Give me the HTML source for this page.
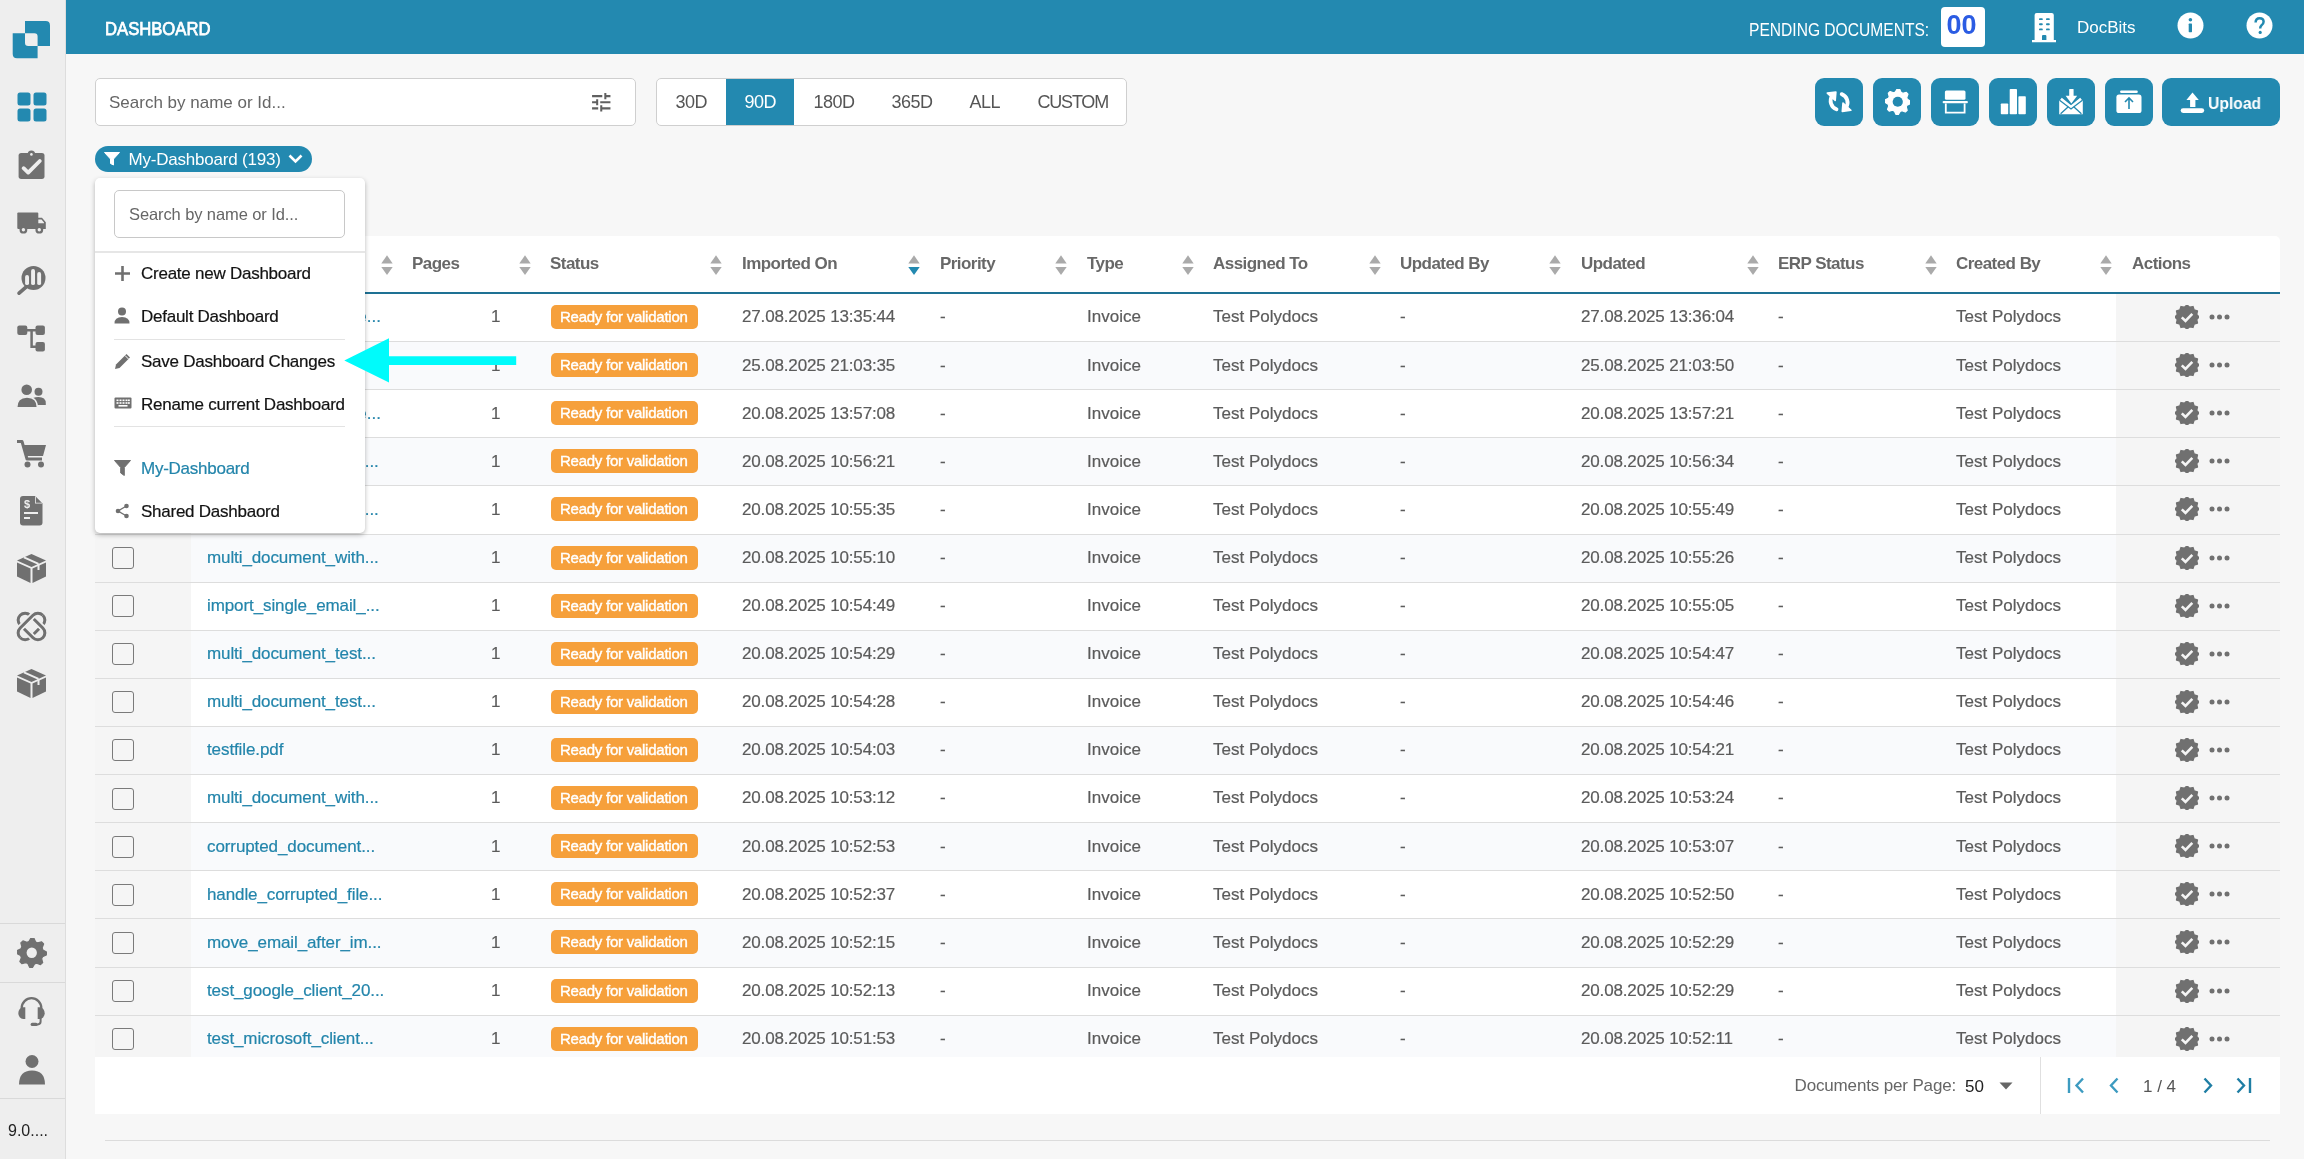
<!DOCTYPE html><html><head><meta charset="utf-8"><style>
*{box-sizing:border-box;margin:0;padding:0}
html,body{width:2304px;height:1159px;overflow:hidden;background:#f7f7f7;font-family:"Liberation Sans",sans-serif;color:#5b5b5b}
.abs{position:absolute}
#side{position:absolute;left:0;top:0;width:66px;height:1159px;background:#eeeeee;border-right:1px solid #dddddd}
#side svg{position:absolute}
.sep{position:absolute;left:0;width:65px;height:1px;background:#d9d9d9}
#hdr{position:absolute;left:66px;top:0;width:2238px;height:54px;background:#2389b0;color:#fff}
.t{position:absolute;white-space:nowrap;line-height:1}
.box{position:absolute;background:#fff;border:1px solid #cfcfcf;border-radius:5px}
.tb{position:absolute;top:78px;width:48px;height:48px;background:#2389b0;border-radius:9px}
.tb svg{position:absolute;left:0;top:0}
#table{position:absolute;left:95px;top:236px;width:2185px;height:821px;background:#fff;border-radius:5px 5px 0 0;overflow:hidden}
.hcell{position:absolute;top:19px;font-weight:bold;font-size:17px;color:#686868;letter-spacing:-0.55px;white-space:nowrap;line-height:1}
.sort{position:absolute;top:19.2px}
.row{position:absolute;left:0;width:2185px;height:48.11px;border-bottom:1px solid #dddddd}
.row.even{background:#f9fafc}
.c{position:absolute;top:14.4px;font-size:17px;line-height:1;white-space:nowrap;color:#5b5b5b;-webkit-text-stroke:0.2px currentColor}
.chkcol{position:absolute;left:0;top:0;width:96px;height:100%;background:#f5f5f5}
.actcol{position:absolute;left:2021px;top:0;width:164px;height:100%;background:#f5f5f5}
.chk{position:absolute;left:17px;top:12.5px;width:22px;height:22px;border:1.7px solid #7a7a7a;border-radius:3px;background:transparent}
.name{color:#2385ab}
.badge{position:absolute;left:456px;top:11px;width:147px;height:24px;background:#f6a03b;border-radius:5px;color:#fff;font-size:15px;-webkit-text-stroke:0.4px #fff;letter-spacing:-0.25px;line-height:24px;padding-left:9px;white-space:nowrap}
#dd{position:absolute;left:95px;top:178px;width:270px;height:355px;background:#fff;border-radius:5px;box-shadow:0 2px 5px rgba(0,0,0,0.28)}
.ddi{position:absolute;left:46px;font-size:17px;color:#131313;white-space:nowrap;line-height:1;letter-spacing:-0.25px;-webkit-text-stroke:0.2px currentColor}
.ddsep{position:absolute;left:19px;width:231px;height:1px;background:#e3e3e3}
</style></head><body><div id="root" style="will-change:transform;position:absolute;left:0;top:0;width:2304px;height:1159px;overflow:hidden">
<div id="side">
<svg style="left:0px;top:0px" width="60" height="60" viewBox="0 0 60 60"><path d="M25 21 H45.6 Q50 21 50 25.4 V46 H37.6 V36.4 Q37.6 33.2 34.4 33.2 H25 Z" fill="#2389b0"/><path d="M12.7 33.2 H25 V42.8 Q25 46 28.2 46 H37.6 V58.2 H17 Q12.7 58.2 12.7 54 Z" fill="#2389b0"/></svg>
<svg style="left:17px;top:92px" width="30" height="30" viewBox="0 0 30 30"><rect x="0.5" y="0.5" width="13" height="13" rx="2.5" fill="#2389b0"/><rect x="16.5" y="0.5" width="13" height="13" rx="2.5" fill="#2389b0"/><rect x="0.5" y="16.5" width="13" height="13" rx="2.5" fill="#2389b0"/><rect x="16.5" y="16.5" width="13" height="13" rx="2.5" fill="#2389b0"/></svg>
<svg style="left:18px;top:150px" width="28" height="30" viewBox="0 0 28 30"><rect x="0.6" y="2.9" width="25.9" height="26" rx="2.6" fill="#707070"/><circle cx="13.4" cy="4.2" r="3.7" fill="#707070"/><circle cx="13.4" cy="4.4" r="1.3" fill="#eee"/><path d="M5.6 18.2 L10.2 22.6 L21.8 11" stroke="#eee" stroke-width="3.8" stroke-linecap="round" stroke-linejoin="round" fill="none"/></svg>
<svg style="left:17px;top:211px" width="30" height="24" viewBox="0 0 30 24"><rect x="0.3" y="1.5" width="21" height="16.4" rx="1" fill="#707070"/><path d="M20.6 6.7 H25 L28.8 11.3 V17.9 H20.6 Z" fill="#707070"/><path d="M21.3 8.4 H24.5 L27 11.5 V12.3 H21.3 Z" fill="#eee"/><circle cx="6.4" cy="18.7" r="3.9" fill="#707070"/><circle cx="6.4" cy="18.7" r="1.7" fill="#eee"/><circle cx="22.3" cy="18.7" r="3.9" fill="#707070"/><circle cx="22.3" cy="18.7" r="1.7" fill="#eee"/></svg>
<svg style="left:17px;top:266px" width="30" height="30" viewBox="0 0 30 30"><circle cx="16.5" cy="12.1" r="12" fill="#707070"/><rect x="8.1" y="9.1" width="3.9" height="10" rx="1.9" fill="#eee"/><rect x="14.1" y="3.1" width="3.9" height="16" rx="1.9" fill="#eee"/><rect x="20.2" y="6.1" width="3.9" height="13" rx="1.9" fill="#eee"/><path d="M9 21.2 L2.1 27.2" stroke="#707070" stroke-width="3.6" stroke-linecap="round"/></svg>
<svg style="left:17px;top:324px" width="30" height="30" viewBox="0 0 30 30"><rect x="0.3" y="1.6" width="10" height="9.5" rx="2" fill="#707070"/><rect x="18.5" y="1.6" width="9.4" height="9.5" rx="2" fill="#707070"/><rect x="18.5" y="18" width="9.4" height="9.5" rx="2" fill="#707070"/><path d="M9 6.3 H19 M14.6 6.3 V22.7 H19" stroke="#707070" stroke-width="2.5" fill="none"/></svg>
<svg style="left:16px;top:383px" width="31" height="27" viewBox="0 0 31 27"><circle cx="22.5" cy="8.7" r="4" fill="#707070"/><path d="M17 22.1 V14.9 Q19.5 14.1 22.5 14.1 Q29.8 14.1 29.8 20.5 V22.1 Z" fill="#707070"/><path d="M0.7 24.8 Q0.7 14.1 11 14.1 Q21.4 14.1 21.4 24.8 Z" fill="#707070" stroke="#eeeeee" stroke-width="1.4"/><circle cx="10.7" cy="6.7" r="5.3" fill="#707070"/></svg>
<svg style="left:16px;top:439px" width="31" height="30" viewBox="0 0 31 30"><path d="M1 2.5 H6 L11 20 H26" stroke="#707070" stroke-width="3" fill="none" stroke-linejoin="round"/><path d="M7 6 H30 L27 17 H10 Z" fill="#707070"/><circle cx="11.5" cy="25.5" r="3" fill="#707070"/><circle cx="25" cy="25.5" r="3" fill="#707070"/></svg>
<svg style="left:20px;top:496px" width="23" height="30" viewBox="0 0 23 30"><path d="M3 0 H15 L22.5 7.5 V26.5 Q22.5 29.5 19.5 29.5 H3 Q0 29.5 0 26.5 V3 Q0 0 3 0 Z" fill="#707070"/><path d="M15 0 V7.5 H22.5" fill="#eee"/><path d="M15.8 0.8 L15.8 6.7 L21.7 6.7 Z" fill="#707070"/><text x="4" y="12" font-size="11" font-family="Liberation Sans" fill="#eee" font-weight="bold">$</text><rect x="4" y="16" width="14" height="2" fill="#eee"/><rect x="4" y="21" width="6" height="2" fill="#eee"/></svg>
<svg style="left:16px;top:553px" width="31" height="31" viewBox="0 0 31 31"><path d="M15.5 1 L30 7.5 L15.5 14 L1 7.5 Z" fill="#707070"/><path d="M1 9.5 L14.5 15.5 V30 L1 23.5 Z" fill="#707070"/><path d="M30 9.5 L16.5 15.5 V30 L30 23.5 Z" fill="#707070"/><path d="M8 4.3 L22.5 10.8" stroke="#eee" stroke-width="2"/><path d="M22.5 11 V17" stroke="#eee" stroke-width="2"/></svg>
<svg style="left:16px;top:611px" width="31" height="31" viewBox="0 0 31 31"><defs><clipPath id="cBR"><path d="M31 0 L31 31 L0 31 Z"/></clipPath><clipPath id="cTL"><path d="M0 0 L31 0 L0 31 Z"/></clipPath></defs><g fill="none" stroke-width="3"><rect x="-16" y="-6.95" width="32" height="13.9" rx="6.95" transform="translate(15.5 15.5) rotate(-45)" stroke="#707070"/><g clip-path="url(#cBR)"><rect x="-16" y="-6.95" width="32" height="13.9" rx="6.95" transform="translate(15.5 15.5) rotate(45)" stroke="#eeeeee" stroke-width="6.5"/></g><rect x="-16" y="-6.95" width="32" height="13.9" rx="6.95" transform="translate(15.5 15.5) rotate(45)" stroke="#707070"/><g clip-path="url(#cTL)"><rect x="-16" y="-6.95" width="32" height="13.9" rx="6.95" transform="translate(15.5 15.5) rotate(-45)" stroke="#eeeeee" stroke-width="6.5"/><rect x="-16" y="-6.95" width="32" height="13.9" rx="6.95" transform="translate(15.5 15.5) rotate(-45)" stroke="#707070"/></g></g></svg>
<svg style="left:16px;top:668px" width="31" height="31" viewBox="0 0 31 31"><path d="M15.5 1 L30 7.5 L15.5 14 L1 7.5 Z" fill="#707070"/><path d="M1 9.5 L14.5 15.5 V30 L1 23.5 Z" fill="#707070"/><path d="M30 9.5 L16.5 15.5 V30 L30 23.5 Z" fill="#707070"/><path d="M8 4.3 L22.5 10.8" stroke="#eee" stroke-width="2"/><path d="M22.5 11 V17" stroke="#eee" stroke-width="2"/></svg>
<div class="sep" style="top:923px"></div><div class="sep" style="top:982px"></div><div class="sep" style="top:1098px"></div>
<svg style="left:17px;top:938px" width="29.5" height="29.5" viewBox="0 0 29.5 29.5"><path d="M14.03 0.02 L16.91 0.16 L18.63 3.92 L20.66 4.88 L24.66 3.82 L26.60 5.96 L25.15 9.83 L25.91 11.95 L29.48 14.03 L29.34 16.91 L25.58 18.63 L24.62 20.66 L25.68 24.66 L23.54 26.60 L19.67 25.15 L17.55 25.91 L15.47 29.48 L12.59 29.34 L10.87 25.58 L8.84 24.62 L4.84 25.68 L2.90 23.54 L4.35 19.67 L3.59 17.55 L0.02 15.47 L0.16 12.59 L3.92 10.87 L4.88 8.84 L3.82 4.84 L5.96 2.90 L9.83 4.35 L11.95 3.59 Z" fill="#707070" stroke="#707070" stroke-width="1.2" stroke-linejoin="round"/><circle cx="14.75" cy="14.75" r="5.16" fill="#eee"/></svg>
<svg style="left:17px;top:997px" width="30" height="31" viewBox="0 0 30 31"><path d="M4.7 14.5 V11 A9.8 9.8 0 0 1 24.3 11 V14.5" stroke="#707070" stroke-width="2.3" fill="none"/><path d="M8.3 10.3 H6.2 A4.9 5.85 0 0 0 6.2 22 H8.3 Z" fill="#707070"/><path d="M20.7 10.3 H22.8 A4.9 5.85 0 0 1 22.8 22 H20.7 Z" fill="#707070"/><path d="M23.6 21 V24.6 Q23.6 27.4 20.8 27.4 H16" stroke="#707070" stroke-width="2" fill="none"/><rect x="13.6" y="25.8" width="7" height="3.2" rx="1.6" fill="#707070"/></svg>
<svg style="left:19px;top:1055px" width="26" height="30" viewBox="0 0 26 30"><circle cx="13" cy="6.5" r="6.5" fill="#707070"/><path d="M0 29.5 Q0 15.5 13 15.5 Q26 15.5 26 29.5 Z" fill="#707070"/></svg>
<div class="t" style="left:8px;top:1123px;font-size:16px;color:#222">9.0....</div>
</div>
<div id="hdr">
<div class="t" style="left:39px;top:20px;font-size:18.5px;-webkit-text-stroke:0.75px #fff;transform:scaleX(0.9);transform-origin:0 0">DASHBOARD</div>
<div class="t" style="left:1683px;top:20.5px;font-size:18px;transform:scaleX(0.866);transform-origin:0 0">PENDING DOCUMENTS:</div>
<div class="abs" style="left:1875px;top:7px;width:44px;height:40px;background:#fff;border-radius:4px"></div>
<div class="t" style="left:1880.5px;top:12px;font-size:27px;font-weight:bold;color:#2b5ce3">00</div>
<svg class="abs" style="left:1966px;top:12px" width="24" height="31" viewBox="0 0 24 31"><path d="M2.6 3 Q2.6 0.9 4.7 0.9 H19.7 Q21.8 0.9 21.8 3 V28 H24 V30.3 H0 V28 H2.6 Z" fill="#fff"/><g fill="#2389b0"><rect x="7" y="6.2" width="3.8" height="1.9" rx="0.9"/><rect x="14" y="6.2" width="3.8" height="1.9" rx="0.9"/><rect x="7" y="11.3" width="3.8" height="1.9" rx="0.9"/><rect x="14" y="11.3" width="3.8" height="1.9" rx="0.9"/><rect x="7" y="16.4" width="3.8" height="1.9" rx="0.9"/><rect x="14" y="16.4" width="3.8" height="1.9" rx="0.9"/><path d="M10 28 V24 Q10 22.9 11.1 22.9 H13.3 Q14.4 22.9 14.4 24 V28 Z"/></g></svg>
<div class="t" style="left:2011px;top:19px;font-size:17px">DocBits</div>
<svg class="abs" style="left:2111px;top:12px" width="27" height="27" viewBox="0 0 27 27"><circle cx="13.5" cy="13.5" r="13" fill="#fff"/><circle cx="13.4" cy="7.8" r="1.8" fill="#2389b0"/><rect x="11.7" y="11.6" width="3.3" height="8.6" rx="0.6" fill="#2389b0"/></svg>
<svg class="abs" style="left:2180px;top:12px" width="27" height="27" viewBox="0 0 27 27"><circle cx="13.5" cy="13.5" r="13" fill="#fff"/><path d="M9.6 10.4 Q9.6 6.2 13.6 6.2 Q17.6 6.2 17.6 9.8 Q17.6 12 15.4 13.4 Q14.2 14.3 14.2 16.6" stroke="#2389b0" stroke-width="2.5" fill="none"/><circle cx="14.2" cy="20.4" r="1.6" fill="#2389b0"/></svg>
</div>
<div class="box" style="left:95px;top:78px;width:541px;height:48px"></div>
<div class="t" style="left:109px;top:93.5px;font-size:17px;color:#666;letter-spacing:0px">Search by name or Id...</div>
<svg class="abs" style="left:588.7px;top:89.6px" width="24.5" height="24.5" viewBox="0 0 24 24" fill="#606060"><path d="M3 17v2h6v-2H3zM3 5v2h10V5H3zm10 16v-2h8v-2h-8v-2h-2v6h2zM7 9v2H3v2h4v2h2V9H7zm14 4v-2H11v2h10zm-6-4h2V7h4V5h-4V3h-2v6z"/></svg>
<div class="box" style="left:656px;top:78px;width:471px;height:48px;overflow:hidden"><div class="abs" style="left:69px;top:0;width:68px;height:46px;background:#2389b0"></div></div>
<div class="t" style="left:675.5px;top:93px;font-size:18px;color:#555;letter-spacing:-0.5px">30D</div>
<div class="t" style="left:744.5px;top:93px;font-size:18px;color:#fff;letter-spacing:-0.5px">90D</div>
<div class="t" style="left:813.5px;top:93px;font-size:18px;color:#555;letter-spacing:-0.5px">180D</div>
<div class="t" style="left:891.5px;top:93px;font-size:18px;color:#555;letter-spacing:-0.5px">365D</div>
<div class="t" style="left:969.5px;top:93px;font-size:18px;color:#555;letter-spacing:-0.5px">ALL</div>
<div class="t" style="left:1037.5px;top:93px;font-size:18px;color:#555;letter-spacing:-1.2px">CUSTOM</div>
<div class="tb" style="left:1815.3px"><svg width="48" height="48" viewBox="0 0 48 48"><g id="syncL"><path d="M21.5 31.3 A9 9 0 0 1 17.2 17.8" stroke="#fff" stroke-width="3.8" fill="none" stroke-linecap="round"/><path d="M12.3 15.1 L20.9 14 L20.2 22.4 Z" fill="#fff" stroke="#fff" stroke-width="1.6" stroke-linejoin="round"/></g><use href="#syncL" transform="rotate(180 24.1 23.7)"/></svg></div>
<div class="tb" style="left:1873.3px"><svg style="left:11.4px;top:11px;position:absolute" width="25.5" height="25.5" viewBox="0 0 25.5 25.5"><path d="M12.12 0.02 L14.62 0.14 L16.10 3.39 L17.86 4.22 L21.31 3.30 L22.99 5.15 L21.74 8.50 L22.40 10.33 L25.48 12.12 L25.36 14.62 L22.11 16.10 L21.28 17.86 L22.20 21.31 L20.35 22.99 L17.00 21.74 L15.17 22.40 L13.38 25.48 L10.88 25.36 L9.40 22.11 L7.64 21.28 L4.19 22.20 L2.51 20.35 L3.76 17.00 L3.10 15.17 L0.02 13.38 L0.14 10.88 L3.39 9.40 L4.22 7.64 L3.30 4.19 L5.15 2.51 L8.50 3.76 L10.33 3.10 Z" fill="#fff" stroke="#fff" stroke-width="1.2" stroke-linejoin="round"/><circle cx="12.75" cy="12.75" r="5.10" fill="#2389b0"/></svg></div>
<div class="tb" style="left:1931.3px"><svg width="48" height="48" viewBox="0 0 48 48"><rect x="13.9" y="12.5" width="20.6" height="9.3" rx="1.5" fill="#fff"/><rect x="11.7" y="23" width="25.1" height="2.2" rx="0.8" fill="#fff"/><path d="M14.8 25.5 V34.6 H33.6 V25.5" stroke="#fff" stroke-width="1.8" fill="none"/></svg></div>
<div class="tb" style="left:1988.7px"><svg width="48" height="48" viewBox="0 0 48 48"><rect x="11.8" y="25.5" width="7.4" height="10.7" rx="0.8" fill="#fff"/><rect x="20.7" y="11" width="7.3" height="25.2" rx="0.8" fill="#fff"/><rect x="29.4" y="18.2" width="7.4" height="18" rx="0.8" fill="#fff"/></svg></div>
<div class="tb" style="left:2046.6px"><svg width="48" height="48" viewBox="0 0 48 48"><path d="M12.2 23 L14.8 19.8 L24 27.2 L33.2 19.8 L35.8 23 V36.2 H12.2 Z" fill="#fff"/><path d="M12.6 22.2 L24 31 L35.4 22.2" stroke="#2389b0" stroke-width="1.3" fill="none"/><path d="M13.6 35.8 L21.3 28.8 M34.4 35.8 L26.7 28.8" stroke="#2389b0" stroke-width="1.3" fill="none"/><rect x="22.2" y="11" width="4.4" height="8" rx="0.6" fill="#fff"/><path d="M18.6 17.8 H30.2 L24.4 25.4 Z" fill="#fff"/></svg></div>
<div class="tb" style="left:2104.5px"><svg width="48" height="48" viewBox="0 0 48 48"><rect x="15.1" y="12.5" width="17.7" height="2.4" rx="1.2" fill="#fff"/><rect x="11.4" y="16.6" width="25.1" height="18.4" rx="2.6" fill="#fff"/><path d="M24 31 V20.2 M20 24 L24 20 L28 24" stroke="#2389b0" stroke-width="1.6" fill="none"/></svg></div>
<div class="tb" style="left:2162px;width:118px"><svg width="48" height="48" viewBox="0 0 48 48" style="left:0px"><path d="M30.5 14.4 L36.8 22 H33.4 V29 H28.1 V22 H24.4 Z" fill="#fff"/><rect x="18.7" y="30.2" width="23.5" height="4.7" rx="2.35" fill="#fff"/></svg><div class="t" style="left:46px;top:17px;font-size:16.5px;font-weight:bold;color:#fff;transform:scaleX(0.95);transform-origin:0 0">Upload</div></div>
<div class="abs" style="left:95px;top:146px;width:217px;height:26px;background:#2389b0;border-radius:13px"></div>
<svg class="abs" style="left:104px;top:152px" width="16" height="14" viewBox="0 0 16 14"><path d="M0.5 0.5 H15.5 L9.5 7 V13 L6.5 11.5 V7 Z" fill="#fff" stroke="#fff" stroke-linejoin="round"/></svg>
<div class="t" style="left:128.5px;top:150.5px;font-size:17px;color:#fff;letter-spacing:-0.2px">My-Dashboard (193)</div>
<svg class="abs" style="left:288px;top:154px" width="15" height="10" viewBox="0 0 15 10"><path d="M1.5 1.5 L7.5 7.5 L13.5 1.5" stroke="#fff" stroke-width="2.6" fill="none"/></svg>
<div id="table">
<div class="hcell" style="left:112px">Name</div>
<div class="hcell" style="left:317px">Pages</div>
<div class="hcell" style="left:455px">Status</div>
<div class="hcell" style="left:647px">Imported On</div>
<div class="hcell" style="left:845px">Priority</div>
<div class="hcell" style="left:992px">Type</div>
<div class="hcell" style="left:1118px">Assigned To</div>
<div class="hcell" style="left:1305px">Updated By</div>
<div class="hcell" style="left:1486px">Updated</div>
<div class="hcell" style="left:1683px">ERP Status</div>
<div class="hcell" style="left:1861px">Created By</div>
<div class="hcell" style="left:2037px">Actions</div>
<svg class="sort" style="left:285.5px" width="12" height="21" viewBox="0 0 12 21"><path d="M6 0.2 L11.7 8.6 L0.3 8.6 Z" fill="#aaaaaa"/><path d="M6 20 L11.7 12 L0.3 12 Z" fill="#aaaaaa"/></svg>
<svg class="sort" style="left:424.0px" width="12" height="21" viewBox="0 0 12 21"><path d="M6 0.2 L11.7 8.6 L0.3 8.6 Z" fill="#aaaaaa"/><path d="M6 20 L11.7 12 L0.3 12 Z" fill="#aaaaaa"/></svg>
<svg class="sort" style="left:615.0px" width="12" height="21" viewBox="0 0 12 21"><path d="M6 0.2 L11.7 8.6 L0.3 8.6 Z" fill="#aaaaaa"/><path d="M6 20 L11.7 12 L0.3 12 Z" fill="#aaaaaa"/></svg>
<svg class="sort" style="left:813.0px" width="12" height="21" viewBox="0 0 12 21"><path d="M6 0.2 L11.7 8.6 L0.3 8.6 Z" fill="#aaaaaa"/><path d="M6 20 L11.7 12 L0.3 12 Z" fill="#2389b0"/></svg>
<svg class="sort" style="left:959.5px" width="12" height="21" viewBox="0 0 12 21"><path d="M6 0.2 L11.7 8.6 L0.3 8.6 Z" fill="#aaaaaa"/><path d="M6 20 L11.7 12 L0.3 12 Z" fill="#aaaaaa"/></svg>
<svg class="sort" style="left:1086.5px" width="12" height="21" viewBox="0 0 12 21"><path d="M6 0.2 L11.7 8.6 L0.3 8.6 Z" fill="#aaaaaa"/><path d="M6 20 L11.7 12 L0.3 12 Z" fill="#aaaaaa"/></svg>
<svg class="sort" style="left:1273.5px" width="12" height="21" viewBox="0 0 12 21"><path d="M6 0.2 L11.7 8.6 L0.3 8.6 Z" fill="#aaaaaa"/><path d="M6 20 L11.7 12 L0.3 12 Z" fill="#aaaaaa"/></svg>
<svg class="sort" style="left:1453.5px" width="12" height="21" viewBox="0 0 12 21"><path d="M6 0.2 L11.7 8.6 L0.3 8.6 Z" fill="#aaaaaa"/><path d="M6 20 L11.7 12 L0.3 12 Z" fill="#aaaaaa"/></svg>
<svg class="sort" style="left:1651.5px" width="12" height="21" viewBox="0 0 12 21"><path d="M6 0.2 L11.7 8.6 L0.3 8.6 Z" fill="#aaaaaa"/><path d="M6 20 L11.7 12 L0.3 12 Z" fill="#aaaaaa"/></svg>
<svg class="sort" style="left:1829.5px" width="12" height="21" viewBox="0 0 12 21"><path d="M6 0.2 L11.7 8.6 L0.3 8.6 Z" fill="#aaaaaa"/><path d="M6 20 L11.7 12 L0.3 12 Z" fill="#aaaaaa"/></svg>
<svg class="sort" style="left:2005.0px" width="12" height="21" viewBox="0 0 12 21"><path d="M6 0.2 L11.7 8.6 L0.3 8.6 Z" fill="#aaaaaa"/><path d="M6 20 L11.7 12 L0.3 12 Z" fill="#aaaaaa"/></svg>
<div class="abs" style="left:0;top:55.5px;width:2185px;height:2px;background:#1e7194;box-shadow:0 0 0.6px #1e7194"></div>
<div class="row" style="top:58.00px"><div class="chkcol"></div><div class="actcol"></div><div class="chk"></div><div class="c name" style="left:112px;letter-spacing:0px">handle_duplicate_file...</div><div class="c" style="left:396px">1</div><div class="badge">Ready for validation</div><div class="c" style="left:647px;letter-spacing:-0.15px">27.08.2025 13:35:44</div><div class="c" style="left:845px">-</div><div class="c" style="left:992px">Invoice</div><div class="c" style="left:1118px">Test Polydocs</div><div class="c" style="left:1305px">-</div><div class="c" style="left:1486px;letter-spacing:-0.15px">27.08.2025 13:36:04</div><div class="c" style="left:1683px">-</div><div class="c" style="left:1861px">Test Polydocs</div><svg class="abs" style="left:2080px;top:11px" width="24" height="24" viewBox="0 0 24 24"><polygon points="12.00,0.00 14.59,2.34 18.00,1.61 19.07,4.93 22.39,6.00 21.66,9.41 24.00,12.00 21.66,14.59 22.39,18.00 19.07,19.07 18.00,22.39 14.59,21.66 12.00,24.00 9.41,21.66 6.00,22.39 4.93,19.07 1.61,18.00 2.34,14.59 0.00,12.00 2.34,9.41 1.61,6.00 4.93,4.93 6.00,1.61 9.41,2.34" fill="#707070" stroke="#707070" stroke-width="1.5" stroke-linejoin="round"/><path d="M6.8 12.3 L10.5 16 L17.3 8.8" stroke="#f5f5f5" stroke-width="2.6" fill="none"/></svg><svg class="abs" style="left:2114px;top:19px" width="22" height="8" viewBox="0 0 22 8"><circle cx="3" cy="4" r="2.5" fill="#707070"/><circle cx="10.5" cy="4" r="2.5" fill="#707070"/><circle cx="18" cy="4" r="2.5" fill="#707070"/></svg></div>
<div class="row even" style="top:106.11px"><div class="chkcol"></div><div class="actcol"></div><div class="chk"></div><div class="c name" style="left:112px;letter-spacing:-0.1px">handle_duplicate_file...</div><div class="c" style="left:396px">1</div><div class="badge">Ready for validation</div><div class="c" style="left:647px;letter-spacing:-0.15px">25.08.2025 21:03:35</div><div class="c" style="left:845px">-</div><div class="c" style="left:992px">Invoice</div><div class="c" style="left:1118px">Test Polydocs</div><div class="c" style="left:1305px">-</div><div class="c" style="left:1486px;letter-spacing:-0.15px">25.08.2025 21:03:50</div><div class="c" style="left:1683px">-</div><div class="c" style="left:1861px">Test Polydocs</div><svg class="abs" style="left:2080px;top:11px" width="24" height="24" viewBox="0 0 24 24"><polygon points="12.00,0.00 14.59,2.34 18.00,1.61 19.07,4.93 22.39,6.00 21.66,9.41 24.00,12.00 21.66,14.59 22.39,18.00 19.07,19.07 18.00,22.39 14.59,21.66 12.00,24.00 9.41,21.66 6.00,22.39 4.93,19.07 1.61,18.00 2.34,14.59 0.00,12.00 2.34,9.41 1.61,6.00 4.93,4.93 6.00,1.61 9.41,2.34" fill="#707070" stroke="#707070" stroke-width="1.5" stroke-linejoin="round"/><path d="M6.8 12.3 L10.5 16 L17.3 8.8" stroke="#f5f5f5" stroke-width="2.6" fill="none"/></svg><svg class="abs" style="left:2114px;top:19px" width="22" height="8" viewBox="0 0 22 8"><circle cx="3" cy="4" r="2.5" fill="#707070"/><circle cx="10.5" cy="4" r="2.5" fill="#707070"/><circle cx="18" cy="4" r="2.5" fill="#707070"/></svg></div>
<div class="row" style="top:154.22px"><div class="chkcol"></div><div class="actcol"></div><div class="chk"></div><div class="c name" style="left:112px;letter-spacing:0px">handle_duplicate_file...</div><div class="c" style="left:396px">1</div><div class="badge">Ready for validation</div><div class="c" style="left:647px;letter-spacing:-0.15px">20.08.2025 13:57:08</div><div class="c" style="left:845px">-</div><div class="c" style="left:992px">Invoice</div><div class="c" style="left:1118px">Test Polydocs</div><div class="c" style="left:1305px">-</div><div class="c" style="left:1486px;letter-spacing:-0.15px">20.08.2025 13:57:21</div><div class="c" style="left:1683px">-</div><div class="c" style="left:1861px">Test Polydocs</div><svg class="abs" style="left:2080px;top:11px" width="24" height="24" viewBox="0 0 24 24"><polygon points="12.00,0.00 14.59,2.34 18.00,1.61 19.07,4.93 22.39,6.00 21.66,9.41 24.00,12.00 21.66,14.59 22.39,18.00 19.07,19.07 18.00,22.39 14.59,21.66 12.00,24.00 9.41,21.66 6.00,22.39 4.93,19.07 1.61,18.00 2.34,14.59 0.00,12.00 2.34,9.41 1.61,6.00 4.93,4.93 6.00,1.61 9.41,2.34" fill="#707070" stroke="#707070" stroke-width="1.5" stroke-linejoin="round"/><path d="M6.8 12.3 L10.5 16 L17.3 8.8" stroke="#f5f5f5" stroke-width="2.6" fill="none"/></svg><svg class="abs" style="left:2114px;top:19px" width="22" height="8" viewBox="0 0 22 8"><circle cx="3" cy="4" r="2.5" fill="#707070"/><circle cx="10.5" cy="4" r="2.5" fill="#707070"/><circle cx="18" cy="4" r="2.5" fill="#707070"/></svg></div>
<div class="row even" style="top:202.33px"><div class="chkcol"></div><div class="actcol"></div><div class="chk"></div><div class="c name" style="left:112px;letter-spacing:-0.1px">multi_document_with...</div><div class="c" style="left:396px">1</div><div class="badge">Ready for validation</div><div class="c" style="left:647px;letter-spacing:-0.15px">20.08.2025 10:56:21</div><div class="c" style="left:845px">-</div><div class="c" style="left:992px">Invoice</div><div class="c" style="left:1118px">Test Polydocs</div><div class="c" style="left:1305px">-</div><div class="c" style="left:1486px;letter-spacing:-0.15px">20.08.2025 10:56:34</div><div class="c" style="left:1683px">-</div><div class="c" style="left:1861px">Test Polydocs</div><svg class="abs" style="left:2080px;top:11px" width="24" height="24" viewBox="0 0 24 24"><polygon points="12.00,0.00 14.59,2.34 18.00,1.61 19.07,4.93 22.39,6.00 21.66,9.41 24.00,12.00 21.66,14.59 22.39,18.00 19.07,19.07 18.00,22.39 14.59,21.66 12.00,24.00 9.41,21.66 6.00,22.39 4.93,19.07 1.61,18.00 2.34,14.59 0.00,12.00 2.34,9.41 1.61,6.00 4.93,4.93 6.00,1.61 9.41,2.34" fill="#707070" stroke="#707070" stroke-width="1.5" stroke-linejoin="round"/><path d="M6.8 12.3 L10.5 16 L17.3 8.8" stroke="#f5f5f5" stroke-width="2.6" fill="none"/></svg><svg class="abs" style="left:2114px;top:19px" width="22" height="8" viewBox="0 0 22 8"><circle cx="3" cy="4" r="2.5" fill="#707070"/><circle cx="10.5" cy="4" r="2.5" fill="#707070"/><circle cx="18" cy="4" r="2.5" fill="#707070"/></svg></div>
<div class="row" style="top:250.44px"><div class="chkcol"></div><div class="actcol"></div><div class="chk"></div><div class="c name" style="left:112px;letter-spacing:-0.1px">multi_document_with...</div><div class="c" style="left:396px">1</div><div class="badge">Ready for validation</div><div class="c" style="left:647px;letter-spacing:-0.15px">20.08.2025 10:55:35</div><div class="c" style="left:845px">-</div><div class="c" style="left:992px">Invoice</div><div class="c" style="left:1118px">Test Polydocs</div><div class="c" style="left:1305px">-</div><div class="c" style="left:1486px;letter-spacing:-0.15px">20.08.2025 10:55:49</div><div class="c" style="left:1683px">-</div><div class="c" style="left:1861px">Test Polydocs</div><svg class="abs" style="left:2080px;top:11px" width="24" height="24" viewBox="0 0 24 24"><polygon points="12.00,0.00 14.59,2.34 18.00,1.61 19.07,4.93 22.39,6.00 21.66,9.41 24.00,12.00 21.66,14.59 22.39,18.00 19.07,19.07 18.00,22.39 14.59,21.66 12.00,24.00 9.41,21.66 6.00,22.39 4.93,19.07 1.61,18.00 2.34,14.59 0.00,12.00 2.34,9.41 1.61,6.00 4.93,4.93 6.00,1.61 9.41,2.34" fill="#707070" stroke="#707070" stroke-width="1.5" stroke-linejoin="round"/><path d="M6.8 12.3 L10.5 16 L17.3 8.8" stroke="#f5f5f5" stroke-width="2.6" fill="none"/></svg><svg class="abs" style="left:2114px;top:19px" width="22" height="8" viewBox="0 0 22 8"><circle cx="3" cy="4" r="2.5" fill="#707070"/><circle cx="10.5" cy="4" r="2.5" fill="#707070"/><circle cx="18" cy="4" r="2.5" fill="#707070"/></svg></div>
<div class="row even" style="top:298.55px"><div class="chkcol"></div><div class="actcol"></div><div class="chk"></div><div class="c name" style="left:112px;letter-spacing:-0.1px">multi_document_with...</div><div class="c" style="left:396px">1</div><div class="badge">Ready for validation</div><div class="c" style="left:647px;letter-spacing:-0.15px">20.08.2025 10:55:10</div><div class="c" style="left:845px">-</div><div class="c" style="left:992px">Invoice</div><div class="c" style="left:1118px">Test Polydocs</div><div class="c" style="left:1305px">-</div><div class="c" style="left:1486px;letter-spacing:-0.15px">20.08.2025 10:55:26</div><div class="c" style="left:1683px">-</div><div class="c" style="left:1861px">Test Polydocs</div><svg class="abs" style="left:2080px;top:11px" width="24" height="24" viewBox="0 0 24 24"><polygon points="12.00,0.00 14.59,2.34 18.00,1.61 19.07,4.93 22.39,6.00 21.66,9.41 24.00,12.00 21.66,14.59 22.39,18.00 19.07,19.07 18.00,22.39 14.59,21.66 12.00,24.00 9.41,21.66 6.00,22.39 4.93,19.07 1.61,18.00 2.34,14.59 0.00,12.00 2.34,9.41 1.61,6.00 4.93,4.93 6.00,1.61 9.41,2.34" fill="#707070" stroke="#707070" stroke-width="1.5" stroke-linejoin="round"/><path d="M6.8 12.3 L10.5 16 L17.3 8.8" stroke="#f5f5f5" stroke-width="2.6" fill="none"/></svg><svg class="abs" style="left:2114px;top:19px" width="22" height="8" viewBox="0 0 22 8"><circle cx="3" cy="4" r="2.5" fill="#707070"/><circle cx="10.5" cy="4" r="2.5" fill="#707070"/><circle cx="18" cy="4" r="2.5" fill="#707070"/></svg></div>
<div class="row" style="top:346.66px"><div class="chkcol"></div><div class="actcol"></div><div class="chk"></div><div class="c name" style="left:112px;letter-spacing:-0.1px">import_single_email_...</div><div class="c" style="left:396px">1</div><div class="badge">Ready for validation</div><div class="c" style="left:647px;letter-spacing:-0.15px">20.08.2025 10:54:49</div><div class="c" style="left:845px">-</div><div class="c" style="left:992px">Invoice</div><div class="c" style="left:1118px">Test Polydocs</div><div class="c" style="left:1305px">-</div><div class="c" style="left:1486px;letter-spacing:-0.15px">20.08.2025 10:55:05</div><div class="c" style="left:1683px">-</div><div class="c" style="left:1861px">Test Polydocs</div><svg class="abs" style="left:2080px;top:11px" width="24" height="24" viewBox="0 0 24 24"><polygon points="12.00,0.00 14.59,2.34 18.00,1.61 19.07,4.93 22.39,6.00 21.66,9.41 24.00,12.00 21.66,14.59 22.39,18.00 19.07,19.07 18.00,22.39 14.59,21.66 12.00,24.00 9.41,21.66 6.00,22.39 4.93,19.07 1.61,18.00 2.34,14.59 0.00,12.00 2.34,9.41 1.61,6.00 4.93,4.93 6.00,1.61 9.41,2.34" fill="#707070" stroke="#707070" stroke-width="1.5" stroke-linejoin="round"/><path d="M6.8 12.3 L10.5 16 L17.3 8.8" stroke="#f5f5f5" stroke-width="2.6" fill="none"/></svg><svg class="abs" style="left:2114px;top:19px" width="22" height="8" viewBox="0 0 22 8"><circle cx="3" cy="4" r="2.5" fill="#707070"/><circle cx="10.5" cy="4" r="2.5" fill="#707070"/><circle cx="18" cy="4" r="2.5" fill="#707070"/></svg></div>
<div class="row even" style="top:394.77px"><div class="chkcol"></div><div class="actcol"></div><div class="chk"></div><div class="c name" style="left:112px;letter-spacing:-0.1px">multi_document_test...</div><div class="c" style="left:396px">1</div><div class="badge">Ready for validation</div><div class="c" style="left:647px;letter-spacing:-0.15px">20.08.2025 10:54:29</div><div class="c" style="left:845px">-</div><div class="c" style="left:992px">Invoice</div><div class="c" style="left:1118px">Test Polydocs</div><div class="c" style="left:1305px">-</div><div class="c" style="left:1486px;letter-spacing:-0.15px">20.08.2025 10:54:47</div><div class="c" style="left:1683px">-</div><div class="c" style="left:1861px">Test Polydocs</div><svg class="abs" style="left:2080px;top:11px" width="24" height="24" viewBox="0 0 24 24"><polygon points="12.00,0.00 14.59,2.34 18.00,1.61 19.07,4.93 22.39,6.00 21.66,9.41 24.00,12.00 21.66,14.59 22.39,18.00 19.07,19.07 18.00,22.39 14.59,21.66 12.00,24.00 9.41,21.66 6.00,22.39 4.93,19.07 1.61,18.00 2.34,14.59 0.00,12.00 2.34,9.41 1.61,6.00 4.93,4.93 6.00,1.61 9.41,2.34" fill="#707070" stroke="#707070" stroke-width="1.5" stroke-linejoin="round"/><path d="M6.8 12.3 L10.5 16 L17.3 8.8" stroke="#f5f5f5" stroke-width="2.6" fill="none"/></svg><svg class="abs" style="left:2114px;top:19px" width="22" height="8" viewBox="0 0 22 8"><circle cx="3" cy="4" r="2.5" fill="#707070"/><circle cx="10.5" cy="4" r="2.5" fill="#707070"/><circle cx="18" cy="4" r="2.5" fill="#707070"/></svg></div>
<div class="row" style="top:442.88px"><div class="chkcol"></div><div class="actcol"></div><div class="chk"></div><div class="c name" style="left:112px;letter-spacing:-0.1px">multi_document_test...</div><div class="c" style="left:396px">1</div><div class="badge">Ready for validation</div><div class="c" style="left:647px;letter-spacing:-0.15px">20.08.2025 10:54:28</div><div class="c" style="left:845px">-</div><div class="c" style="left:992px">Invoice</div><div class="c" style="left:1118px">Test Polydocs</div><div class="c" style="left:1305px">-</div><div class="c" style="left:1486px;letter-spacing:-0.15px">20.08.2025 10:54:46</div><div class="c" style="left:1683px">-</div><div class="c" style="left:1861px">Test Polydocs</div><svg class="abs" style="left:2080px;top:11px" width="24" height="24" viewBox="0 0 24 24"><polygon points="12.00,0.00 14.59,2.34 18.00,1.61 19.07,4.93 22.39,6.00 21.66,9.41 24.00,12.00 21.66,14.59 22.39,18.00 19.07,19.07 18.00,22.39 14.59,21.66 12.00,24.00 9.41,21.66 6.00,22.39 4.93,19.07 1.61,18.00 2.34,14.59 0.00,12.00 2.34,9.41 1.61,6.00 4.93,4.93 6.00,1.61 9.41,2.34" fill="#707070" stroke="#707070" stroke-width="1.5" stroke-linejoin="round"/><path d="M6.8 12.3 L10.5 16 L17.3 8.8" stroke="#f5f5f5" stroke-width="2.6" fill="none"/></svg><svg class="abs" style="left:2114px;top:19px" width="22" height="8" viewBox="0 0 22 8"><circle cx="3" cy="4" r="2.5" fill="#707070"/><circle cx="10.5" cy="4" r="2.5" fill="#707070"/><circle cx="18" cy="4" r="2.5" fill="#707070"/></svg></div>
<div class="row even" style="top:490.99px"><div class="chkcol"></div><div class="actcol"></div><div class="chk"></div><div class="c name" style="left:112px;letter-spacing:-0.1px">testfile.pdf</div><div class="c" style="left:396px">1</div><div class="badge">Ready for validation</div><div class="c" style="left:647px;letter-spacing:-0.15px">20.08.2025 10:54:03</div><div class="c" style="left:845px">-</div><div class="c" style="left:992px">Invoice</div><div class="c" style="left:1118px">Test Polydocs</div><div class="c" style="left:1305px">-</div><div class="c" style="left:1486px;letter-spacing:-0.15px">20.08.2025 10:54:21</div><div class="c" style="left:1683px">-</div><div class="c" style="left:1861px">Test Polydocs</div><svg class="abs" style="left:2080px;top:11px" width="24" height="24" viewBox="0 0 24 24"><polygon points="12.00,0.00 14.59,2.34 18.00,1.61 19.07,4.93 22.39,6.00 21.66,9.41 24.00,12.00 21.66,14.59 22.39,18.00 19.07,19.07 18.00,22.39 14.59,21.66 12.00,24.00 9.41,21.66 6.00,22.39 4.93,19.07 1.61,18.00 2.34,14.59 0.00,12.00 2.34,9.41 1.61,6.00 4.93,4.93 6.00,1.61 9.41,2.34" fill="#707070" stroke="#707070" stroke-width="1.5" stroke-linejoin="round"/><path d="M6.8 12.3 L10.5 16 L17.3 8.8" stroke="#f5f5f5" stroke-width="2.6" fill="none"/></svg><svg class="abs" style="left:2114px;top:19px" width="22" height="8" viewBox="0 0 22 8"><circle cx="3" cy="4" r="2.5" fill="#707070"/><circle cx="10.5" cy="4" r="2.5" fill="#707070"/><circle cx="18" cy="4" r="2.5" fill="#707070"/></svg></div>
<div class="row" style="top:539.10px"><div class="chkcol"></div><div class="actcol"></div><div class="chk"></div><div class="c name" style="left:112px;letter-spacing:-0.1px">multi_document_with...</div><div class="c" style="left:396px">1</div><div class="badge">Ready for validation</div><div class="c" style="left:647px;letter-spacing:-0.15px">20.08.2025 10:53:12</div><div class="c" style="left:845px">-</div><div class="c" style="left:992px">Invoice</div><div class="c" style="left:1118px">Test Polydocs</div><div class="c" style="left:1305px">-</div><div class="c" style="left:1486px;letter-spacing:-0.15px">20.08.2025 10:53:24</div><div class="c" style="left:1683px">-</div><div class="c" style="left:1861px">Test Polydocs</div><svg class="abs" style="left:2080px;top:11px" width="24" height="24" viewBox="0 0 24 24"><polygon points="12.00,0.00 14.59,2.34 18.00,1.61 19.07,4.93 22.39,6.00 21.66,9.41 24.00,12.00 21.66,14.59 22.39,18.00 19.07,19.07 18.00,22.39 14.59,21.66 12.00,24.00 9.41,21.66 6.00,22.39 4.93,19.07 1.61,18.00 2.34,14.59 0.00,12.00 2.34,9.41 1.61,6.00 4.93,4.93 6.00,1.61 9.41,2.34" fill="#707070" stroke="#707070" stroke-width="1.5" stroke-linejoin="round"/><path d="M6.8 12.3 L10.5 16 L17.3 8.8" stroke="#f5f5f5" stroke-width="2.6" fill="none"/></svg><svg class="abs" style="left:2114px;top:19px" width="22" height="8" viewBox="0 0 22 8"><circle cx="3" cy="4" r="2.5" fill="#707070"/><circle cx="10.5" cy="4" r="2.5" fill="#707070"/><circle cx="18" cy="4" r="2.5" fill="#707070"/></svg></div>
<div class="row even" style="top:587.21px"><div class="chkcol"></div><div class="actcol"></div><div class="chk"></div><div class="c name" style="left:112px;letter-spacing:-0.1px">corrupted_document...</div><div class="c" style="left:396px">1</div><div class="badge">Ready for validation</div><div class="c" style="left:647px;letter-spacing:-0.15px">20.08.2025 10:52:53</div><div class="c" style="left:845px">-</div><div class="c" style="left:992px">Invoice</div><div class="c" style="left:1118px">Test Polydocs</div><div class="c" style="left:1305px">-</div><div class="c" style="left:1486px;letter-spacing:-0.15px">20.08.2025 10:53:07</div><div class="c" style="left:1683px">-</div><div class="c" style="left:1861px">Test Polydocs</div><svg class="abs" style="left:2080px;top:11px" width="24" height="24" viewBox="0 0 24 24"><polygon points="12.00,0.00 14.59,2.34 18.00,1.61 19.07,4.93 22.39,6.00 21.66,9.41 24.00,12.00 21.66,14.59 22.39,18.00 19.07,19.07 18.00,22.39 14.59,21.66 12.00,24.00 9.41,21.66 6.00,22.39 4.93,19.07 1.61,18.00 2.34,14.59 0.00,12.00 2.34,9.41 1.61,6.00 4.93,4.93 6.00,1.61 9.41,2.34" fill="#707070" stroke="#707070" stroke-width="1.5" stroke-linejoin="round"/><path d="M6.8 12.3 L10.5 16 L17.3 8.8" stroke="#f5f5f5" stroke-width="2.6" fill="none"/></svg><svg class="abs" style="left:2114px;top:19px" width="22" height="8" viewBox="0 0 22 8"><circle cx="3" cy="4" r="2.5" fill="#707070"/><circle cx="10.5" cy="4" r="2.5" fill="#707070"/><circle cx="18" cy="4" r="2.5" fill="#707070"/></svg></div>
<div class="row" style="top:635.32px"><div class="chkcol"></div><div class="actcol"></div><div class="chk"></div><div class="c name" style="left:112px;letter-spacing:-0.1px">handle_corrupted_file...</div><div class="c" style="left:396px">1</div><div class="badge">Ready for validation</div><div class="c" style="left:647px;letter-spacing:-0.15px">20.08.2025 10:52:37</div><div class="c" style="left:845px">-</div><div class="c" style="left:992px">Invoice</div><div class="c" style="left:1118px">Test Polydocs</div><div class="c" style="left:1305px">-</div><div class="c" style="left:1486px;letter-spacing:-0.15px">20.08.2025 10:52:50</div><div class="c" style="left:1683px">-</div><div class="c" style="left:1861px">Test Polydocs</div><svg class="abs" style="left:2080px;top:11px" width="24" height="24" viewBox="0 0 24 24"><polygon points="12.00,0.00 14.59,2.34 18.00,1.61 19.07,4.93 22.39,6.00 21.66,9.41 24.00,12.00 21.66,14.59 22.39,18.00 19.07,19.07 18.00,22.39 14.59,21.66 12.00,24.00 9.41,21.66 6.00,22.39 4.93,19.07 1.61,18.00 2.34,14.59 0.00,12.00 2.34,9.41 1.61,6.00 4.93,4.93 6.00,1.61 9.41,2.34" fill="#707070" stroke="#707070" stroke-width="1.5" stroke-linejoin="round"/><path d="M6.8 12.3 L10.5 16 L17.3 8.8" stroke="#f5f5f5" stroke-width="2.6" fill="none"/></svg><svg class="abs" style="left:2114px;top:19px" width="22" height="8" viewBox="0 0 22 8"><circle cx="3" cy="4" r="2.5" fill="#707070"/><circle cx="10.5" cy="4" r="2.5" fill="#707070"/><circle cx="18" cy="4" r="2.5" fill="#707070"/></svg></div>
<div class="row even" style="top:683.43px"><div class="chkcol"></div><div class="actcol"></div><div class="chk"></div><div class="c name" style="left:112px;letter-spacing:-0.1px">move_email_after_im...</div><div class="c" style="left:396px">1</div><div class="badge">Ready for validation</div><div class="c" style="left:647px;letter-spacing:-0.15px">20.08.2025 10:52:15</div><div class="c" style="left:845px">-</div><div class="c" style="left:992px">Invoice</div><div class="c" style="left:1118px">Test Polydocs</div><div class="c" style="left:1305px">-</div><div class="c" style="left:1486px;letter-spacing:-0.15px">20.08.2025 10:52:29</div><div class="c" style="left:1683px">-</div><div class="c" style="left:1861px">Test Polydocs</div><svg class="abs" style="left:2080px;top:11px" width="24" height="24" viewBox="0 0 24 24"><polygon points="12.00,0.00 14.59,2.34 18.00,1.61 19.07,4.93 22.39,6.00 21.66,9.41 24.00,12.00 21.66,14.59 22.39,18.00 19.07,19.07 18.00,22.39 14.59,21.66 12.00,24.00 9.41,21.66 6.00,22.39 4.93,19.07 1.61,18.00 2.34,14.59 0.00,12.00 2.34,9.41 1.61,6.00 4.93,4.93 6.00,1.61 9.41,2.34" fill="#707070" stroke="#707070" stroke-width="1.5" stroke-linejoin="round"/><path d="M6.8 12.3 L10.5 16 L17.3 8.8" stroke="#f5f5f5" stroke-width="2.6" fill="none"/></svg><svg class="abs" style="left:2114px;top:19px" width="22" height="8" viewBox="0 0 22 8"><circle cx="3" cy="4" r="2.5" fill="#707070"/><circle cx="10.5" cy="4" r="2.5" fill="#707070"/><circle cx="18" cy="4" r="2.5" fill="#707070"/></svg></div>
<div class="row" style="top:731.54px"><div class="chkcol"></div><div class="actcol"></div><div class="chk"></div><div class="c name" style="left:112px;letter-spacing:-0.1px">test_google_client_20...</div><div class="c" style="left:396px">1</div><div class="badge">Ready for validation</div><div class="c" style="left:647px;letter-spacing:-0.15px">20.08.2025 10:52:13</div><div class="c" style="left:845px">-</div><div class="c" style="left:992px">Invoice</div><div class="c" style="left:1118px">Test Polydocs</div><div class="c" style="left:1305px">-</div><div class="c" style="left:1486px;letter-spacing:-0.15px">20.08.2025 10:52:29</div><div class="c" style="left:1683px">-</div><div class="c" style="left:1861px">Test Polydocs</div><svg class="abs" style="left:2080px;top:11px" width="24" height="24" viewBox="0 0 24 24"><polygon points="12.00,0.00 14.59,2.34 18.00,1.61 19.07,4.93 22.39,6.00 21.66,9.41 24.00,12.00 21.66,14.59 22.39,18.00 19.07,19.07 18.00,22.39 14.59,21.66 12.00,24.00 9.41,21.66 6.00,22.39 4.93,19.07 1.61,18.00 2.34,14.59 0.00,12.00 2.34,9.41 1.61,6.00 4.93,4.93 6.00,1.61 9.41,2.34" fill="#707070" stroke="#707070" stroke-width="1.5" stroke-linejoin="round"/><path d="M6.8 12.3 L10.5 16 L17.3 8.8" stroke="#f5f5f5" stroke-width="2.6" fill="none"/></svg><svg class="abs" style="left:2114px;top:19px" width="22" height="8" viewBox="0 0 22 8"><circle cx="3" cy="4" r="2.5" fill="#707070"/><circle cx="10.5" cy="4" r="2.5" fill="#707070"/><circle cx="18" cy="4" r="2.5" fill="#707070"/></svg></div>
<div class="row even" style="top:779.65px"><div class="chkcol"></div><div class="actcol"></div><div class="chk"></div><div class="c name" style="left:112px;letter-spacing:-0.1px">test_microsoft_client...</div><div class="c" style="left:396px">1</div><div class="badge">Ready for validation</div><div class="c" style="left:647px;letter-spacing:-0.15px">20.08.2025 10:51:53</div><div class="c" style="left:845px">-</div><div class="c" style="left:992px">Invoice</div><div class="c" style="left:1118px">Test Polydocs</div><div class="c" style="left:1305px">-</div><div class="c" style="left:1486px;letter-spacing:-0.15px">20.08.2025 10:52:11</div><div class="c" style="left:1683px">-</div><div class="c" style="left:1861px">Test Polydocs</div><svg class="abs" style="left:2080px;top:11px" width="24" height="24" viewBox="0 0 24 24"><polygon points="12.00,0.00 14.59,2.34 18.00,1.61 19.07,4.93 22.39,6.00 21.66,9.41 24.00,12.00 21.66,14.59 22.39,18.00 19.07,19.07 18.00,22.39 14.59,21.66 12.00,24.00 9.41,21.66 6.00,22.39 4.93,19.07 1.61,18.00 2.34,14.59 0.00,12.00 2.34,9.41 1.61,6.00 4.93,4.93 6.00,1.61 9.41,2.34" fill="#707070" stroke="#707070" stroke-width="1.5" stroke-linejoin="round"/><path d="M6.8 12.3 L10.5 16 L17.3 8.8" stroke="#f5f5f5" stroke-width="2.6" fill="none"/></svg><svg class="abs" style="left:2114px;top:19px" width="22" height="8" viewBox="0 0 22 8"><circle cx="3" cy="4" r="2.5" fill="#707070"/><circle cx="10.5" cy="4" r="2.5" fill="#707070"/><circle cx="18" cy="4" r="2.5" fill="#707070"/></svg></div>
</div>
<div class="abs" style="left:95px;top:1057px;width:2185px;height:57px;background:#fff"></div>
<div class="abs" style="left:2040px;top:1057px;width:1px;height:57px;background:#e0e0e0"></div>
<div class="t" style="left:1794.5px;top:1077px;font-size:17px;color:#666;letter-spacing:-0.15px">Documents per Page:</div>
<div class="t" style="left:1965px;top:1078px;font-size:17px;color:#222">50</div>
<svg class="abs" style="left:1999px;top:1082px" width="14" height="8" viewBox="0 0 14 8"><path d="M0.5 0.5 H13.5 L7 7.5 Z" fill="#666"/></svg>
<svg class="abs" style="left:2066px;top:1076px" width="22" height="19" viewBox="0 0 22 19"><path d="M3 2 V17" stroke="#3d9bc0" stroke-width="2.4"/><path d="M17 2.5 L10.5 9.5 L17 16.5" stroke="#3d9bc0" stroke-width="2.4" fill="none"/></svg>
<svg class="abs" style="left:2106px;top:1076px" width="16" height="19" viewBox="0 0 16 19"><path d="M11.5 2.5 L5 9.5 L11.5 16.5" stroke="#3d9bc0" stroke-width="2.4" fill="none"/></svg>
<div class="t" style="left:2143px;top:1078px;font-size:17px;color:#555">1 / 4</div>
<svg class="abs" style="left:2200px;top:1076px" width="16" height="19" viewBox="0 0 16 19"><path d="M4.5 2.5 L11 9.5 L4.5 16.5" stroke="#1f7ea4" stroke-width="2.4" fill="none"/></svg>
<svg class="abs" style="left:2233px;top:1076px" width="22" height="19" viewBox="0 0 22 19"><path d="M4.5 2.5 L11 9.5 L4.5 16.5" stroke="#1f7ea4" stroke-width="2.4" fill="none"/><path d="M17 2 V17" stroke="#1f7ea4" stroke-width="2.4"/></svg>
<div class="abs" style="left:105px;top:1140px;width:2165px;height:1px;background:#dcdcdc"></div>
<div id="dd">
<div class="box" style="left:19px;top:12px;width:231px;height:48px;border-color:#c8c8c8"></div>
<div class="t" style="left:34px;top:28px;font-size:16.5px;color:#666;letter-spacing:-0.1px">Search by name or Id...</div>
<div class="abs" style="left:0;top:73px;width:270px;height:1.5px;background:#e6e6e6"></div>
<div class="ddi" style="top:86.5px;color:#131313">Create new Dashboard</div>
<div class="ddi" style="top:130px;color:#131313">Default Dashboard</div>
<div class="ddi" style="top:174.5px;color:#131313">Save Dashboard Changes</div>
<div class="ddi" style="top:217.5px;color:#131313">Rename current Dashboard</div>
<div class="ddi" style="top:281.5px;color:#2385ab">My-Dashboard</div>
<div class="ddi" style="top:325px;color:#131313">Shared Dashbaord</div>
<div class="ddsep" style="top:160.5px"></div><div class="ddsep" style="top:248px"></div>
<svg class="abs" style="left:19px;top:87px" width="17" height="17" viewBox="0 0 17 17"><path d="M8.5 1 V16 M1 8.5 H16" stroke="#707070" stroke-width="2.6"/></svg>
<svg class="abs" style="left:19px;top:129px" width="16" height="17" viewBox="0 0 16 17"><circle cx="8" cy="4.5" r="4" fill="#707070"/><path d="M0.5 16.5 Q0.5 10 8 10 Q15.5 10 15.5 16.5 Z" fill="#707070"/></svg>
<svg class="abs" style="left:19px;top:174px" width="18" height="18" viewBox="0 0 18 18"><path d="M1 17 L2 12.5 L12.5 2 L16 5.5 L5.5 16 Z" fill="#707070"/><path d="M11 3.5 L14.5 7" stroke="#fff" stroke-width="1"/></svg>
<svg class="abs" style="left:19px;top:219px" width="18" height="12" viewBox="0 0 18 12"><rect x="0.5" y="0.5" width="17" height="11" rx="1" fill="#707070"/><g fill="#fff"><rect x="2.5" y="2.5" width="2" height="1.6"/><rect x="5.5" y="2.5" width="2" height="1.6"/><rect x="8.5" y="2.5" width="2" height="1.6"/><rect x="11.5" y="2.5" width="2" height="1.6"/><rect x="14" y="2.5" width="1.8" height="1.6"/><rect x="2.5" y="5.2" width="2" height="1.6"/><rect x="5.5" y="5.2" width="2" height="1.6"/><rect x="8.5" y="5.2" width="2" height="1.6"/><rect x="11.5" y="5.2" width="2" height="1.6"/><rect x="14" y="5.2" width="1.8" height="1.6"/><rect x="4.5" y="8" width="9" height="1.6"/></g></svg>
<svg class="abs" style="left:19px;top:282px" width="17" height="16" viewBox="0 0 17 16"><path d="M0.5 0.5 H16.5 L10.3 7.5 V15.5 L6.7 13 V7.5 Z" fill="#707070" stroke="#707070" stroke-linejoin="round"/></svg>
<svg class="abs" style="left:20px;top:325px" width="15" height="16" viewBox="0 0 15 16"><circle cx="11.5" cy="3" r="2.3" fill="#707070"/><circle cx="3" cy="8" r="2.3" fill="#707070"/><circle cx="11.5" cy="13" r="2.3" fill="#707070"/><path d="M11.5 3 L3 8 L11.5 13" stroke="#707070" stroke-width="1.4" fill="none"/></svg>
</div>
<svg class="abs" style="left:340px;top:335px" width="180" height="52" viewBox="0 0 180 52"><path d="M4.3 25.4 L49 3.2 L49 21.3 L176.2 21.3 L176.2 30 L49 30 L49 47.5 Z" fill="#00fbfb"/></svg>
</div></body></html>
